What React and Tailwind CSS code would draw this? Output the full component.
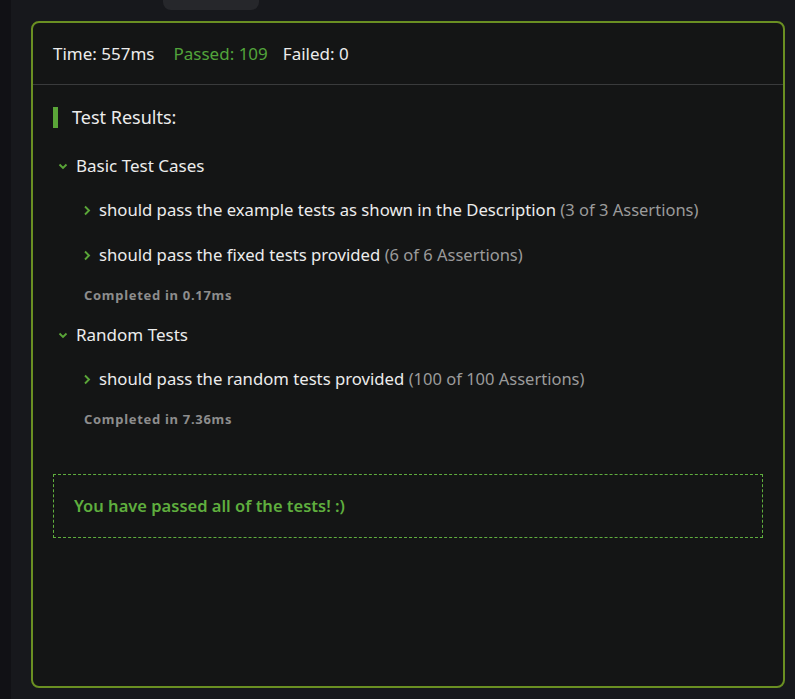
import React from 'react';

const tests = [
  {
    title: 'Basic Test Cases',
    items: [
      { name: 'should pass the example tests as shown in the Description', note: '(3 of 3 Assertions)' },
      { name: 'should pass the fixed tests provided', note: '(6 of 6 Assertions)' },
    ],
    time: '0.17ms',
  },
  {
    title: 'Random Tests',
    items: [{ name: 'should pass the random tests provided', note: '(100 of 100 Assertions)' }],
    time: '7.36ms',
  },
];

function ChevronDown() {
  return (
    <svg width="10" height="8" viewBox="0 0 10 8" className="shrink-0">
      <path d="M1.5 2.5 L5 6 L8.5 2.5" fill="none" stroke="#5aa538" strokeWidth="1.9" />
    </svg>
  );
}

function ChevronRight() {
  return (
    <svg width="8" height="11" viewBox="0 0 8 11" className="shrink-0">
      <path d="M2 1.5 L6 5.5 L2 9.5" fill="none" stroke="#5aa538" strokeWidth="1.9" />
    </svg>
  );
}

export default function App() {
  return (
    <div
      className="flex h-[699px] w-[795px] overflow-hidden bg-[#17181c] text-[#ececec]"
      style={{ fontFamily: '"Noto Sans", "Open Sans", sans-serif' }}
    >
      <div className="w-[11px] shrink-0 bg-[#111115]" />
      <div className="flex-1">
        <div className="ml-[152px] h-[10px] w-[96px] rounded-b-lg bg-[#26272b]" />
        <div className="ml-[20px] mt-[11px] flex h-[667px] w-[754px] flex-col rounded-lg border-2 border-[#6a8f22] bg-[#141515]">
          <div className="flex h-[62px] items-center border-b border-[#3a3b3c] px-5 text-[17px]">
            <span>Time: 557ms</span>
            <span className="ml-[19px] text-[#52a43b]">Passed: 109</span>
            <span className="ml-[15px]">Failed: 0</span>
          </div>

          <div className="px-5 pt-[19px]">
            <div className="flex items-center gap-[14px]">
              <div className="h-[21px] w-[5px] bg-[#5aa538]" />
              <span className="text-[18px]">Test Results:</span>
            </div>

            <div className="mt-[23px] flex flex-col">
              {tests.map((group) => (
                <div key={group.title} className="mb-[19px]">
                  <div className="flex h-[24px] items-center gap-[8px] pl-[5px] text-[17px]">
                    <ChevronDown />
                    <span>{group.title}</span>
                  </div>
                  <div className="mt-[14px] flex flex-col gap-[9px] pl-[30px]">
                    {group.items.map((item) => (
                      <div key={item.name} className="flex h-[36px] items-center gap-[8px]">
                        <ChevronRight />
                        <span className="text-[16.7px]">
                          {item.name} <span className="text-[16.5px] text-[#9b9b9b]">{item.note}</span>
                        </span>
                      </div>
                    ))}
                  </div>
                  <div className="mt-[13px] pl-[31px] text-[13px] font-bold leading-[18px] tracking-[0.7px] text-[#8d8d8d]">
                    Completed in {group.time}
                  </div>
                </div>
              ))}
            </div>

            <div className="mt-[27px] flex h-[64px] items-center border border-dashed border-[#5fae3e] px-5">
              <span className="text-[16.5px] font-semibold text-[#5fae3e]">You have passed all of the tests! :)</span>
            </div>
          </div>
        </div>
      </div>
    </div>
  );
}
